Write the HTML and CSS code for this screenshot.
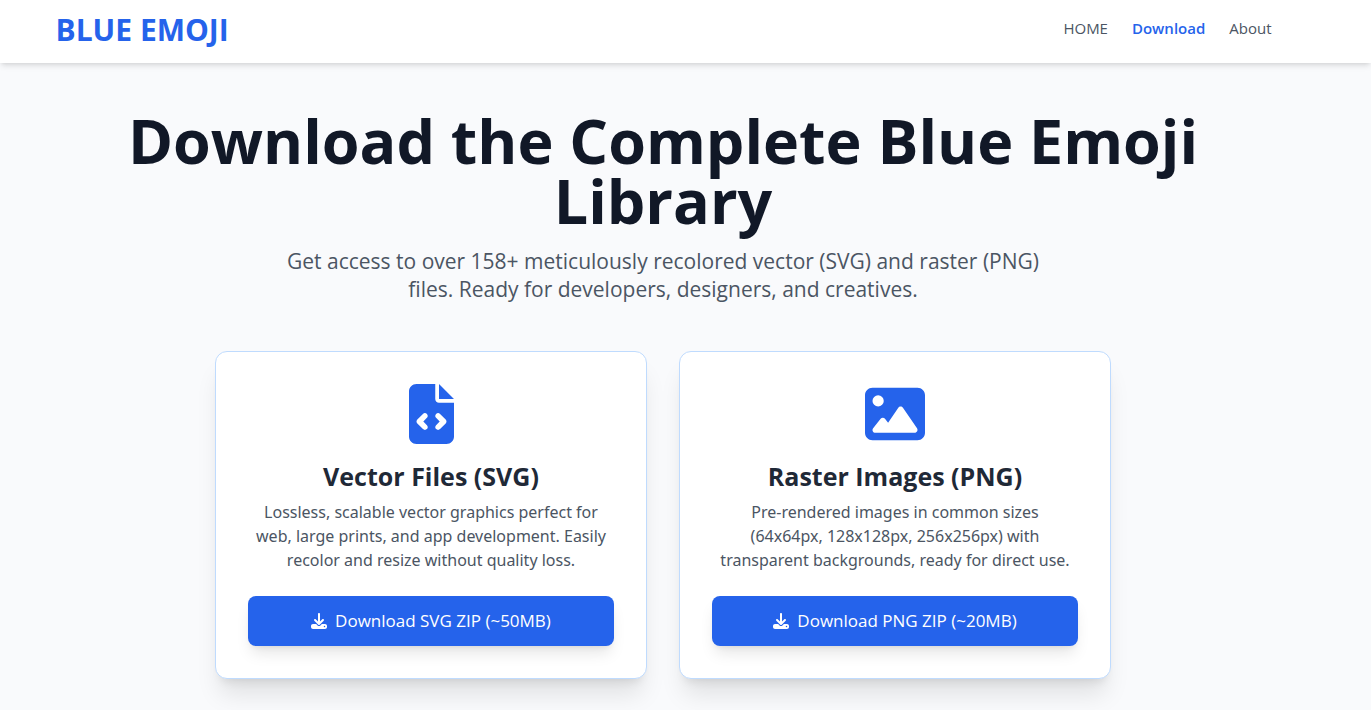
FILE: index.html
```
<!DOCTYPE html>
<html lang="en">
<head>
	<meta charset="UTF-8" />
	<meta name="viewport" content="width=device-width, initial-scale=1.0" />
	<title>Download - Blue Emoji</title>
	<link rel="stylesheet" href="styles.css">
</head>
<body>
	<!-- Header -->
	<header class="header">
		<div class="container header-inner">
			<a href="#" class="logo">BLUE EMOJI</a>
			<nav class="nav">
				<a href="#">HOME</a>
				<a href="#" class="active">Download</a>
				<a href="#">About</a>
			</nav>
		</div>
	</header>
	<!-- End of Header -->

	<!-- Download -->
	<main class="main">
		<section class="intro">
			<h1>Download the Complete Blue Emoji Library</h1>
			<p>Get access to over 158+ meticulously recolored vector (SVG) and raster (PNG) files. Ready for developers, designers, and creatives.</p>
		</section>

		<section class="cards">
			<article class="card">
				<svg class="card-icon" viewBox="0 0 384 512" aria-hidden="true">
					<path d="M64 0C28.700 0 0 28.700 0 64V448c0 35.300 28.700 64 64 64H320c35.300 0 64-28.700 64-64V160H256c-17.700 0-32-14.300-32-32V0H64zM256 0V128H384L256 0zM153 289l-31 31 31 31c9.400 9.400 9.400 24.600 0 33.900s-24.600 9.400-33.900 0L71 337c-9.400-9.400-9.400-24.600 0-33.900l48-48c9.400-9.400 24.600-9.400 33.900 0s9.400 24.600 0 33.900zM265 255l48 48c9.400 9.400 9.400 24.600 0 33.900l-48 48c-9.400 9.400-24.600 9.400-33.900 0s-9.400-24.600 0-33.900l31-31-31-31c-9.400-9.400-9.400-24.600 0-33.900s24.600-9.400 33.900 0z"/>
				</svg>
				<h2>Vector Files (SVG)</h2>
				<p>Lossless, scalable vector graphics perfect for web, large prints, and app development. Easily recolor and resize without quality loss.</p>
				<a href="#" class="btn">
					<svg class="btn-icon" viewBox="0 0 512 512" aria-hidden="true">
						<path d="M288 32c0-17.700-14.300-32-32-32s-32 14.300-32 32V274.700l-73.400-73.400c-12.500-12.500-32.800-12.500-45.300 0s-12.500 32.800 0 45.300l128 128c12.500 12.500 32.800 12.500 45.300 0l128-128c12.500-12.500 12.500-32.800 0-45.300s-32.800-12.500-45.300 0L288 274.700V32zM64 352c-35.300 0-64 28.700-64 64v32c0 35.300 28.700 64 64 64H448c35.300 0 64-28.700 64-64V416c0-35.300-28.700-64-64-64H346.500l-45.300 45.300c-25 25-65.500 25-90.500 0L165.500 352H64zm368 56a24 24 0 1 1 0 48 24 24 0 1 1 0-48z"/>
					</svg>
					<span>Download SVG ZIP (~50MB)</span>
				</a>
			</article>

			<article class="card">
				<svg class="card-icon" viewBox="0 0 512 512" aria-hidden="true">
					<path d="M0 96C0 60.700 28.700 32 64 32H448c35.300 0 64 28.700 64 64V416c0 35.300-28.700 64-64 64H64c-35.300 0-64-28.700-64-64V96zM323.800 202.500c-4.500-6.600-11.900-10.500-19.800-10.500s-15.400 3.900-19.800 10.500l-87 127.600L170.700 297c-4.600-5.700-11.500-9-18.700-9s-14.200 3.300-18.700 9l-64 80c-5.800 7.200-6.900 17.100-2.900 25.400s12.400 13.600 21.600 13.600H424c8.900 0 17.100-4.900 21.200-12.800s3.600-17.400-1.400-24.700l-120-176zM112 192a48 48 0 1 0 0-96 48 48 0 1 0 0 96z"/>
				</svg>
				<h2>Raster Images (PNG)</h2>
				<p>Pre-rendered images in common sizes (64x64px, 128x128px, 256x256px) with transparent backgrounds, ready for direct use.</p>
				<a href="#" class="btn">
					<svg class="btn-icon" viewBox="0 0 512 512" aria-hidden="true">
						<path d="M288 32c0-17.700-14.300-32-32-32s-32 14.300-32 32V274.700l-73.400-73.400c-12.500-12.500-32.800-12.500-45.300 0s-12.500 32.800 0 45.300l128 128c12.500 12.500 32.800 12.500 45.300 0l128-128c12.500-12.500 12.500-32.800 0-45.300s-32.800-12.500-45.300 0L288 274.700V32zM64 352c-35.300 0-64 28.700-64 64v32c0 35.300 28.700 64 64 64H448c35.300 0 64-28.700 64-64V416c0-35.300-28.700-64-64-64H346.500l-45.300 45.300c-25 25-65.500 25-90.500 0L165.500 352H64zm368 56a24 24 0 1 1 0 48 24 24 0 1 1 0-48z"/>
					</svg>
					<span>Download PNG ZIP (~20MB)</span>
				</a>
			</article>
		</section>
	</main>
	<!-- End of Download -->
</body>
</html>
```
FILE: styles.css
```
:root {
	--primary: #2563eb;
	--border: #bfdbfe;
	--bg: #f9fafc;
	--grey: #4b5563;
	--dark: #1f2937;
	--darker: #111827;
}

* {
	margin: 0;
	padding: 0;
	box-sizing: border-box;
}

body {
	background: var(--bg);
	color: var(--dark);
	font-family: "Segoe UI", "Open Sans", sans-serif;
	font-size: 16px;
	line-height: 24px;
}

a {
	text-decoration: none;
}

/* Header */
.header {
	padding-right: 44px;
	background: #fff;
	box-shadow: 0 4px 6px -1px rgba(0, 0, 0, 0.1), 0 2px 4px -2px rgba(0, 0, 0, 0.1);
}

.container {
	max-width: 1280px;
	margin: 0 auto;
	padding: 0 32px;
}

.header-inner {
	display: flex;
	justify-content: space-between;
	padding-top: 12px;
	padding-bottom: 15px;
}

.logo {
	color: var(--primary);
	font-size: 30px;
	font-weight: 700;
	line-height: 36px;
}

.nav {
	display: flex;
	gap: 24px;
	padding-top: 4px;
	font-size: 15px;
}

.nav a {
	color: var(--grey);
}

.nav .active {
	color: var(--primary);
	font-weight: 600;
}

/* Intro */
.main {
	padding: 48px 77px 31px 32px;
}

.intro {
	margin-bottom: 48px;
	text-align: center;
}

.intro h1 {
	max-width: 1216px;
	margin: 0 auto 16px;
	color: var(--darker);
	font-size: 61px;
	font-weight: 700;
	line-height: 60px;
}

.intro p {
	max-width: 768px;
	margin: 0 auto;
	color: var(--grey);
	font-size: 21px;
	line-height: 28px;
}

/* Cards */
.cards {
	display: grid;
	grid-template-columns: repeat(auto-fit, minmax(300px, 1fr));
	gap: 32px;
	max-width: 896px;
	margin: 0 auto;
}

.card {
	display: flex;
	flex-direction: column;
	align-items: center;
	padding: 32px;
	background: #fff;
	border: 1px solid var(--border);
	border-radius: 12px;
	box-shadow: 0 20px 25px -5px rgba(0, 0, 0, 0.1), 0 8px 10px -6px rgba(0, 0, 0, 0.1);
	text-align: center;
}

.card-icon {
	height: 60px;
	margin-bottom: 16px;
	fill: var(--primary);
}

.card h2 {
	margin-bottom: 8px;
	font-size: 25px;
	font-weight: 700;
	line-height: 32px;
}

.card p {
	margin-bottom: 24px;
	padding: 0 4px;
	color: var(--grey);
	font-family: "Segoe UI", "Noto Sans", sans-serif;
}

.btn {
	display: flex;
	align-items: center;
	justify-content: center;
	gap: 8px;
	width: 100%;
	margin-top: auto;
	padding: 13px 24px;
	color: #fff;
	background: var(--primary);
	border-radius: 8px;
	box-shadow: 0 10px 15px -3px rgba(0, 0, 0, 0.1), 0 4px 6px -4px rgba(0, 0, 0, 0.1);
	font-size: 17px;
}

.btn-icon {
	width: 16px;
	height: 16px;
	fill: currentColor;
}

.btn:hover {
	background: #1d4ed8;
}
```
